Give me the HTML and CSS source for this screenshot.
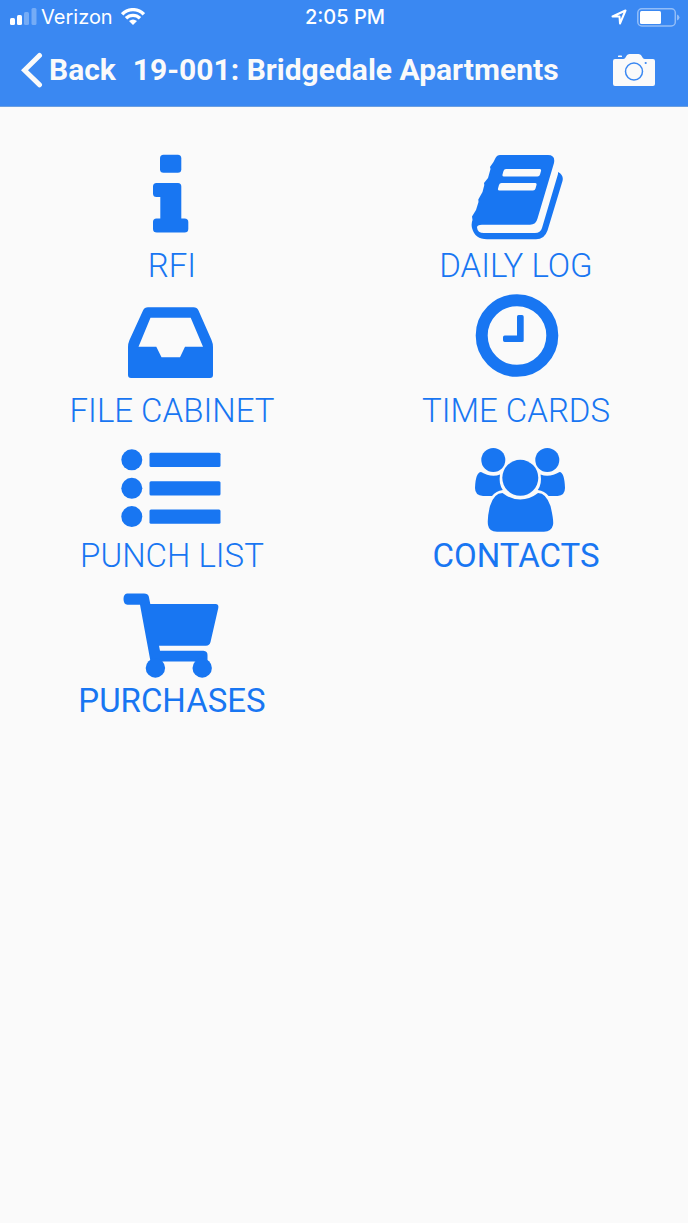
FILE: index.html
```html
<!DOCTYPE html>
<html lang="en">
<head>
  <meta charset="UTF-8" />
  <meta name="viewport" content="width=device-width, initial-scale=1.0" />
  <title>19-001: Bridgedale Apartments</title>
  <link rel="stylesheet" href="styles.css">
</head>
<body>
  <header class="header">
    <div class="status-bar">
      <div class="status-left">
        <svg width="27" height="18" viewBox="0 0 27 18" fill="#fff">
          <rect x="0" y="10" width="5" height="7" rx="1.5" />
          <rect x="7" y="7" width="5" height="10" rx="1.5" />
          <rect x="14" y="4" width="5" height="13" rx="1.5" opacity="0.3" />
          <rect x="21.5" y="0" width="5" height="17" rx="1.5" opacity="0.3" />
        </svg>
        <span class="carrier">Verizon</span>
        <svg width="24" height="18" viewBox="0 0 24 18" fill="none" stroke="#fff" stroke-width="3.4">
          <path d="M1.200 6.300C7.200 .1 16.800 .1 22.800 6.300" />
          <path d="M5 10.300C9 6.400 15 6.400 19 10.300" />
          <path d="M8 13Q12 10 16 13L12 17Z" fill="#fff" stroke="none" />
        </svg>
      </div>
      <div class="status-time">2:05 PM</div>
      <div class="status-right">
        <svg width="16" height="16" viewBox="0 0 16 16" fill="none" stroke="#fff" stroke-width="2" stroke-linejoin="round">
          <path d="M1.5 7.500L14.500 1.500L9 14.500L8.500 7.500Z" />
        </svg>
        <svg width="43" height="19" viewBox="0 0 43 19">
          <rect x=".8" y=".8" width="37.5" height="17.2" rx="4" fill="none" stroke="#fff" stroke-width="1.5" opacity="0.45" />
          <rect x="3" y="3" width="21" height="13" rx="1.5" fill="#fff" />
          <path d="M40 6.500Q42.500 7.500 42.500 9.500T40 12.500Z" fill="#fff" opacity="0.45" />
        </svg>
      </div>
    </div>
    <nav class="nav-bar">
      <button type="button" class="back-btn">
        <svg width="22" height="36" viewBox="0 0 22 36" fill="none" stroke="#fafafa" stroke-width="5" stroke-linecap="round" stroke-linejoin="miter">
          <path d="M18.500 3.500L3.500 18.200L18.500 32.800" />
        </svg>
        <span class="nav-text">Back</span>
      </button>
      <h1 class="title nav-text">19-001: Bridgedale Apartments</h1>
      <button type="button" class="camera-btn" aria-label="Camera">
        <svg width="42" height="32" viewBox="0 0 42 32">
          <path d="M5 3V2.300Q5 1.600 5.700 1.600H8.300Q9 1.600 9 2.300V3Z" fill="#fafafa" />
          <path d="M2 5H10Q11.500 5 12.500 3.500L13.700 1.500Q14.500 0 16.500 0H25.500Q27.500 0 28.300 1.500L29.500 3.500Q30.500 5 32 5H40Q42 5 42 7V30Q42 32 40 32H2Q0 32 0 30V7Q0 5 2 5Z" fill="#fafafa" />
          <circle cx="21" cy="17.5" r="8.5" fill="none" stroke="#3a88f2" stroke-width="1.5" />
          <circle cx="32.7" cy="9" r="1.1" fill="#3a88f2" />
        </svg>
      </button>
    </nav>
  </header>

  <main class="menu">
    <a class="menu-item" href="#rfi">
      <svg class="icon" viewBox="0 0 120 105">
        <rect x="48" y="13.7" width="21.3" height="18" rx="3.5" />
        <path d="M44.500 42H66Q69.300 42 69.300 45.500V77.500H72.500Q76.300 77.500 76.300 81V88Q76.300 91.500 72.500 91.500H45Q41 91.500 41 88V81Q41 77.500 44.500 77.500H48.300V56H44.500Q41 56 41 52.500V45.500Q41 42 44.500 42Z" />
      </svg>
      <span>RFI</span>
    </a>
    <a class="menu-item" href="#daily-log">
      <svg class="icon" viewBox="0 0 120 105">
        <path fill-rule="evenodd" d="M44 14H92Q99.500 14 98 22L81.500 77.500Q80 83.700 74 83.700H26Q21 83.700 21 86.500Q21.500 92 28 92H79Q84.500 92 86 87L102 33V31Q108 34 106.500 40L91.500 89.500Q88.500 98.300 80 98.300H31Q19 98.300 16 87Q15 83 16.500 79L16 75.500L20 69L22.500 61L22.300 58.500L26.500 51L28.300 44L28 42L32 37L34.500 28L34 26L37.500 21L39.500 17Q41 14 44 14ZM50 28Q48 28 47.500 30L46.500 33.500Q46 35.500 48 35.500H81.500Q83.500 35.500 84 33.500L85 30Q85.500 28 83.500 28ZM45.500 42Q43.500 42 43 44L42 47.500Q41.500 49.500 43.500 49.500H77Q79 49.500 79.500 47.500L80.500 44Q81 42 79 42Z" />
      </svg>
      <span>DAILY LOG</span>
    </a>
    <a class="menu-item" href="#file-cabinet">
      <svg class="icon" viewBox="0 0 120 105">
        <path fill-rule="evenodd" d="M36 21.300H81.500Q85 21.300 86.500 24.500L99.500 54Q101 57.500 101 61V89Q101 92 98 92H19Q16 92 16 89V61Q16 57.500 17.500 54L31 24.500Q32.500 21.300 36 21.300ZM38.500 31.800L26.500 60.800H44.300L49.500 71.300H68L73 60.800H91L78.700 31.800Z" />
      </svg>
      <span>FILE CABINET</span>
    </a>
    <a class="menu-item" href="#time-cards">
      <svg class="icon" viewBox="0 0 120 105">
        <circle cx="61" cy="49.5" r="35.3" fill="none" stroke="#1876f2" stroke-width="12" />
        <path d="M62.500 29H66Q67.700 29 67.700 30.700V54.500Q67.700 56 66 56H48.700Q47 56 47 54.300V51.300Q47 49.600 48.700 49.600H61V30.700Q61 29 62.500 29Z" />
      </svg>
      <span>TIME CARDS</span>
    </a>
    <a class="menu-item" href="#punch-list">
      <svg class="icon" viewBox="0 0 120 105">
        <circle cx="19.8" cy="28.8" r="10.5" />
        <circle cx="19.8" cy="57.3" r="10.5" />
        <circle cx="19.8" cy="85.6" r="10.5" />
        <rect x="37.5" y="21.8" width="71" height="14.2" rx="1.5" />
        <rect x="37.5" y="50.2" width="71" height="14.2" rx="1.5" />
        <rect x="37.5" y="78.5" width="71" height="14.2" rx="1.5" />
      </svg>
      <span>PUNCH LIST</span>
    </a>
    <a class="menu-item" href="#contacts">
      <svg class="icon" viewBox="0 0 120 105">
        <circle cx="37.3" cy="29" r="12" />
        <circle cx="91.3" cy="29" r="12" />
        <path d="M25 41Q31 44.700 37.500 44.700Q41 44.700 44 43.500Q42.500 53 46.800 59Q40 60 36 65H27Q19 64.500 19 57Q19.500 41.500 25 41Z" />
        <path d="M103.600 41Q97.600 44.700 91.100 44.700Q87.600 44.700 84.600 43.500Q86.100 53 81.800 59Q88.600 60 92.600 65H101.600Q109 64.500 109 57Q108.500 41.500 103.600 41Z" />
        <circle cx="64.3" cy="46.8" r="18" />
        <path d="M46.500 62Q55 68.500 64.300 68.500T82.100 62Q90 62 94.500 75Q98 90 97 94Q95.500 100.500 88 100.700H41Q33 100.500 32 94Q31 87 34 75Q38 62 46.500 62Z" />
      </svg>
      <span class="regular">CONTACTS</span>
    </a>
    <a class="menu-item" href="#purchases">
      <svg class="icon" viewBox="0 0 120 105">
        <path d="M15 17.500H32Q36 17.500 36.800 20.500L38.300 28H103.500Q107 28 106.300 32L98.500 66Q97.500 69.800 94 69.800H47L48 74.700H91.500Q95.500 75 95.500 79V85.500H38.500L28 28.700H15.500Q11.500 28.500 11.500 23Q11.500 18 15 17.500Z" />
        <circle cx="43.4" cy="92" r="9.7" />
        <circle cx="90.2" cy="92" r="9.7" />
      </svg>
      <span class="regular">PURCHASES</span>
    </a>
  </main>
</body>
</html>
```
FILE: styles.css
```css
/* General Styles */
* {
  box-sizing: border-box;
}

body {
  font-family: Roboto, "Liberation Sans", sans-serif;
  margin: 0;
  background-color: #fafafa;
}

svg {
  display: block;
  flex-shrink: 0;
}

/* Header */
.header {
  background-color: #3a88f2;
  color: #fafafa;
  border-bottom: 1px solid #6b9fe0;
}

.status-bar {
  display: grid;
  grid-template-columns: 1fr auto 1fr;
  align-items: center;
  height: 34px;
  padding: 0 8px 0 10px;
  font-family: Inter, sans-serif;
  font-size: 20px;
  color: #fff;
}

.status-left, .status-right {
  display: flex;
  align-items: center;
}

.carrier {
  margin: 0 8px 0 4px;
}

.status-time {
  font-weight: 500;
}

.status-right {
  justify-content: flex-end;
  gap: 10px;
}

.nav-bar {
  display: flex;
  align-items: center;
  height: 72px;
  padding: 0 33px 0 21px;
}

.nav-bar button {
  padding: 0;
  background: none;
  border: none;
  color: inherit;
  cursor: pointer;
}

.nav-bar .back-btn {
  display: flex;
  align-items: center;
  gap: 6px;
  font-family: inherit;
}

.nav-text {
  padding-bottom: 2px;
  font-size: 30px;
  font-weight: 700;
}

.title {
  flex: 1;
  margin: 0 0 0 17px;
  white-space: nowrap;
}

/* Menu */
.menu {
  display: grid;
  grid-template-columns: 1fr 1fr;
  padding-top: 34px;
}

.menu-item {
  display: flex;
  flex-direction: column;
  align-items: center;
  color: #1876f2;
  font-size: 33px;
  font-weight: 350;
  line-height: 40px;
  text-decoration: none;
}

.menu-item .regular {
  font-weight: 400;
}

.icon {
  width: 120px;
  height: 105px;
  fill: #1876f2;
}
```
